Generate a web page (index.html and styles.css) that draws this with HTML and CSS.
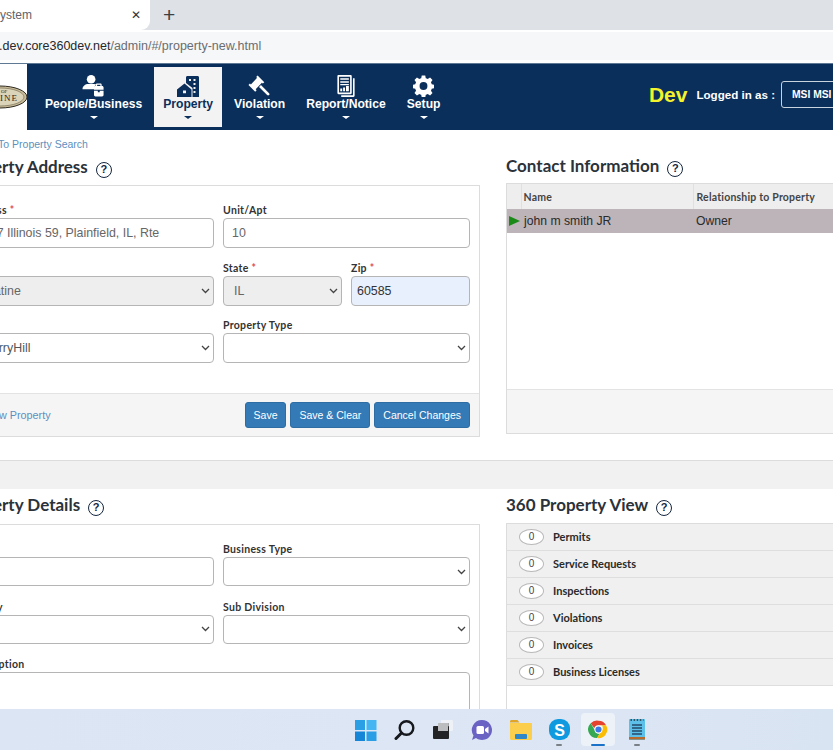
FILE: index.html
```html
<!DOCTYPE html>
<html>
<head>
	<title>Property System</title>
	<link rel="stylesheet" href="styles.css">
</head>
<body>
	<div class="browser-tabs">
		<div class="tab"><span class="tab-title">System</span><span class="tab-close">✕</span></div>
		<span class="tab-new">+</span>
	</div>
	<div class="browser-bar">
		<div class="url"><b>.dev.core360dev.net</b>/admin/#/property-new.html</div>
	</div>

	<header class="topnav">
		<div class="logo">
			<svg width="27" height="30" viewBox="0 0 27 30">
				<ellipse cx="0" cy="15" rx="27" ry="11" fill="#c9bd9b" stroke="#2e2a20" stroke-width="1"/>
				<ellipse cx="0" cy="15" rx="24" ry="9" fill="#dcd4b8" stroke="#6b6248" stroke-width="0.6"/>
				<text x="1" y="11" class="logo-small">OF</text>
				<text x="0" y="19" class="logo-big">INE</text>
			</svg>
		</div>
		<nav class="menu">
			<a class="menu-item">
				<svg width="24" height="23" viewBox="0 0 24 23" fill="#fff">
					<circle cx="9" cy="4.5" r="4.5"/>
					<path d="M0 15c0-3.500 3-5.500 6-5.500h6c1 0 2 .3 2.800.8-1.500.7-2.300 1.800-2.300 3.200-.0.500-.1 1-.5 1.500z"/>
					<path d="M16 11.500v-1.200c0-.7.500-1.300 1.300-1.300h3.400c.8 0 1.300.6 1.300 1.300v1.200h.5c.8 0 1.500.7 1.500 1.500v2.500h-10v-2.500c0-.8.700-1.500 1.500-1.500zm1.300 0h3.400v-1.200h-3.400zM14 16.500h4v1.500h2v-1.500h4v4.500c0 .8-.7 1.500-1.500 1.500h-7c-.8 0-1.500-.7-1.500-1.500z" transform="translate(-2 0)"/>
				</svg>
				<span>People/Business</span><i class="caret"></i>
			</a>
			<a class="menu-item active">
				<svg width="22" height="22" viewBox="0 0 22 22" fill="#0b2f5b">
					<path d="M9 2.500c0-1 .7-1.500 1.500-1.500h10c.8 0 1.500.5 1.500 1.500v19.500h-6.500v-9l-6.500-5zM12 4v2h2v-2zm4.500 0v2h2v-2zm0 4v2h2v-2zm0 4v2h2v-2zm0 4v2h2v-2z" fill-rule="evenodd"/>
					<path d="M0 14.500l7.500-6 7 6v7.500h-14.500zM6 15.500v2.800h3v-2.800z" fill-rule="evenodd"/>
				</svg>
				<span>Property</span><i class="caret"></i>
			</a>
			<a class="menu-item">
				<svg width="23" height="23" viewBox="0 0 23 23" fill="#fff">
					<path d="M0 10.500l1.500-1.500 1 1 6.500-7-1-1 1.500-1.500 7 7-1.500 1.500-1-1-6.500 7 1 1-1.500 1.500z"/>
					<path d="M11 12.500l2-2 8.500 8.500c.6.6.6 1.400 0 2-.6.6-1.400.6-2 0z"/>
				</svg>
				<span>Violation</span><i class="caret"></i>
			</a>
			<a class="menu-item">
				<svg width="18" height="23" viewBox="0 0 18 23" fill="#fff">
					<path d="M1.200 0h12.600c.7 0 1.200.5 1.200 1.200v17.600c0 .7-.5 1.200-1.200 1.200h-12.600c-.7 0-1.200-.5-1.200-1.200v-17.600c0-.7.500-1.200 1.200-1.200zm.5 1.700v16.600h11.600v-16.600z" fill-rule="evenodd"/>
					<path d="M3 3.500h9v1.500h-9zM3 6.500h9v1.500h-9zM3 9.500h9v1.300h-9zM3 14h2v3h-2zM6 13h2v4h-2zM9 11.500h3v5.500h-3z"/>
					<path d="M16.300 3.500h1.700v18.300c0 .7-.5 1.200-1.200 1.200h-12.800v-1.700h12.300z"/>
				</svg>
				<span>Report/Notice</span><i class="caret"></i>
			</a>
			<a class="menu-item">
				<svg width="21" height="23" viewBox="0 0 24 24" fill="#fff">
					<path fill-rule="evenodd" d="M10 0h4l.6 3.200c.8.200 1.500.5 2.200.9l2.700-1.800 2.800 2.800-1.800 2.700c.4.700.7 1.400.9 2.200l3.200.6v4l-3.200.6c-.2.800-.5 1.500-.9 2.200l1.800 2.700-2.800 2.800-2.700-1.800c-.7.400-1.400.7-2.200.9l-.6 3.200h-4l-.6-3.200c-.8-.2-1.500-.5-2.200-.9l-2.700 1.800-2.800-2.800 1.800-2.700c-.4-.7-.7-1.400-.9-2.200l-3.200-.6v-4l3.200-.6c.2-.8.5-1.500.9-2.200l-1.800-2.700 2.800-2.800 2.700 1.800c.7-.4 1.400-.7 2.200-.9zM12 7.500a4.500 4.500 0 1 0 0 9 4.500 4.500 0 0 0 0-9z"/>
				</svg>
				<span>Setup</span><i class="caret"></i>
			</a>
		</nav>
		<div class="account">
			<span class="env">Dev</span>
			<span class="logged">Logged in as :</span>
			<button class="user-btn" type="button">MSI MSI</button>
		</div>
	</header>

	<main class="page">
		<a class="back-link">Back To Property Search</a>

		<div class="columns">
			<section>
				<h2>Property Address <span class="help">?</span></h2>
				<div class="card">
					<div class="card-body">
						<div class="field half">
							<label>Address <em>*</em></label>
							<input type="text" class="muted" value="1627 Illinois 59, Plainfield, IL, Rte">
						</div>
						<div class="field half">
							<label>Unit/Apt</label>
							<input type="text" class="muted" value="10">
						</div>
						<div class="field half">
							<label>City <em>*</em></label>
							<select class="locked" disabled><option>Palatine</option></select>
						</div>
						<div class="field quarter state">
							<label>State <em>*</em></label>
							<select class="locked" disabled><option>IL</option></select>
						</div>
						<div class="field quarter zip">
							<label>Zip <em>*</em></label>
							<input type="text" class="filled" value="60585">
						</div>
						<div class="field half">
							<label>Town</label>
							<select><option>CherryHill</option></select>
						</div>
						<div class="field half">
							<label>Property Type</label>
							<select><option></option></select>
						</div>
					</div>
					<div class="card-footer">
						<a class="new-link">Add New Property</a>
						<button type="button">Save</button>
						<button type="button">Save &amp; Clear</button>
						<button type="button">Cancel Changes</button>
					</div>
				</div>
			</section>

			<section class="side">
				<h2>Contact Information <span class="help">?</span></h2>
				<div class="contacts">
					<table>
						<thead>
							<tr><th class="gutter"></th><th class="name-col">Name</th><th>Relationship to Property</th></tr>
						</thead>
						<tbody>
							<tr><td class="gutter"><i class="arrow"></i></td><td>john m smith JR</td><td>Owner</td></tr>
						</tbody>
					</table>
					<div class="contacts-footer"></div>
				</div>
			</section>
		</div>

		<div class="band"></div>

		<div class="columns">
			<section>
				<h2 class="second">Property Details <span class="help">?</span></h2>
				<div class="card">
					<div class="card-body details">
						<div class="field half">
							<label>Name</label>
							<input type="text">
						</div>
						<div class="field half">
							<label>Business Type</label>
							<select><option></option></select>
						</div>
						<div class="field half">
							<label>County</label>
							<select><option></option></select>
						</div>
						<div class="field half">
							<label>Sub Division</label>
							<select><option></option></select>
						</div>
						<div class="field full">
							<label>Description</label>
							<textarea></textarea>
						</div>
					</div>
				</div>
			</section>

			<section class="side">
				<h2 class="second">360 Property View <span class="help">?</span></h2>
				<ul class="counts">
					<li><span class="pill">0</span>Permits</li>
					<li><span class="pill">0</span>Service Requests</li>
					<li><span class="pill">0</span>Inspections</li>
					<li><span class="pill">0</span>Violations</li>
					<li><span class="pill">0</span>Invoices</li>
					<li><span class="pill">0</span>Business Licenses</li>
				</ul>
			</section>
		</div>
	</main>

	<footer class="taskbar">
		<span class="task-icon">
			<svg width="22" height="22" viewBox="0 0 22 22">
				<path fill="#2b9fe6" d="M0 1h10v10h-10z"/><path fill="#45b6f2" d="M11.500 1h10v10h-10z"/>
				<path fill="#1585d8" d="M0 12.500h10v9.500h-10z"/><path fill="#2b9fe6" d="M11.500 12.500h10v9.500h-10z"/>
			</svg>
		</span>
		<span class="task-icon">
			<svg width="22" height="22" viewBox="0 0 22 22" fill="none" stroke="#16191d" stroke-width="2.400">
				<circle cx="12.500" cy="9" r="6.800"/><path d="M7.500 14l-5.500 5.500" stroke-linecap="round" stroke-width="3"/>
			</svg>
		</span>
		<span class="task-icon">
			<svg width="20" height="20" viewBox="0 0 20 20">
				<rect x="8" y="0" width="12" height="11" rx="1" fill="#eef1f6"/>
				<rect x="5" y="3" width="11" height="10" fill="#a8a9ab"/>
				<rect x="0" y="6" width="16" height="13" rx="1" fill="#232426"/>
				<rect x="5" y="3" width="10" height="8" fill="#bcbdbf"/>
			</svg>
		</span>
		<span class="task-icon">
			<svg width="22" height="22" viewBox="0 0 22 22">
				<path fill="#6a63c4" d="M11 1a10 10 0 1 1-6 18l-4 2 1.500-4.500a10 10 0 0 1 8.500-15.500z"/>
				<rect x="5.500" y="7" width="7.500" height="8" rx="1.500" fill="#fff"/><path fill="#fff" d="M14 10l3.500-2.500v7l-3.500-2.500z"/>
			</svg>
		</span>
		<span class="task-icon">
			<svg width="22" height="20" viewBox="0 0 22 20">
				<path fill="#e0a526" d="M0 1.500c0-.8.500-1.500 1.500-1.500h6l2 2.500h-9.500z"/>
				<path fill="#fbcf4d" d="M0 3h21c.6 0 1 .4 1 1v14.500c0 .8-.6 1.500-1.500 1.500h-19c-.9 0-1.500-.7-1.500-1.500z"/>
				<rect x="5" y="14" width="12" height="5" rx="1" fill="#2f86c9"/>
			</svg>
		</span>
		<span class="task-icon with-dot">
			<svg width="21" height="21" viewBox="0 0 21 21">
				<rect width="21" height="21" rx="9" fill="#0f9ae0"/>
				<text x="10.500" y="16.500" class="skype-s">S</text>
			</svg>
		</span>
		<span class="task-icon current">
			<svg width="21" height="21" viewBox="0 0 48 48">
				<path fill="#e5432f" d="M24 4a20 20 0 0 1 17.300 10h-17.300a10 10 0 0 0-9.600 7.300l-8.200-11.800a20 20 0 0 1 17.800-5.500z"/>
				<path fill="#34a853" d="M6.200 9.500l8.700 15a10 10 0 0 0 12 8.800l-6.200 10.400a20 20 0 0 1-14.500-34.200z"/>
				<path fill="#fbbc05" d="M41.300 14a20 20 0 0 1-20.600 29.700l8.700-15a10 10 0 0 0 2.300-14.700z"/>
				<circle cx="24" cy="24" r="9" fill="#fff"/><circle cx="24" cy="24" r="7" fill="#3b78e7"/>
			</svg>
		</span>
		<span class="task-icon with-dot">
			<svg width="18" height="24" viewBox="0 0 18 24">
				<rect x="1" y="1" width="16" height="21" rx="1" fill="#5cc0e8"/>
				<path fill="#b66a2c" d="M1 19h16v2.500h-16z"/>
				<path stroke="#234a68" stroke-width="1.300" d="M4 7h10M4 10h10M4 13h10M4 16h10"/>
				<path stroke="#24303a" stroke-width="1.600" stroke-dasharray="1.500 1.600" d="M2.500 2h13"/>
			</svg>
		</span>
	</footer>
</body>
</html>
```

FILE: styles.css
```css
* {
	box-sizing: border-box;
}
html, body {
	margin: 0;
	height: 750px;
	overflow: hidden;
}
body {
	display: flex;
	flex-direction: column;
	font-family: "Liberation Sans", Arial, sans-serif;
	background-color: #fff;
	color: #333;
}

/* browser chrome */
.browser-tabs {
	display: flex;
	align-items: center;
	flex: 0 0 30px;
	background-color: #dee1e6;
}
.tab {
	display: flex;
	align-items: center;
	justify-content: space-between;
	width: 150px;
	height: 30px;
	padding-right: 9px;
	background-color: #fff;
	border-bottom-right-radius: 9px;
	font-size: 12px;
	color: #5f6368;
}
.tab-title {
	margin-left: -8px;
}
.tab-close {
	font-size: 12px;
	color: #333;
}
.tab-new {
	margin-left: 13px;
	font-size: 21px;
	line-height: 28px;
	color: #3c4043;
}
.browser-bar {
	flex: 0 0 33px;
	padding: 2px 0;
	background-color: #fff;
}
.url {
	height: 28px;
	margin-left: -1px;
	background-color: #f6f7f8;
	font-size: 12.5px;
	line-height: 28px;
	color: #6a6d71;
	white-space: nowrap;
}
.url b {
	font-weight: normal;
	color: #25282c;
}

/* app header */
.topnav {
	display: flex;
	align-items: center;
	flex: 0 0 67px;
	background-color: #0b2f5b;
	border-top: 1px solid #5f7894;
	overflow: hidden;
}
.logo {
	display: flex;
	align-items: center;
	width: 27px;
	height: 66px;
	background-color: #fff;
}
.logo-small {
	font-family: "Liberation Serif", serif;
	font-size: 5px;
	fill: #2e2a20;
}
.logo-big {
	font-family: "Liberation Serif", serif;
	font-size: 9px;
	letter-spacing: 1px;
	fill: #2e2a20;
}
.menu {
	display: flex;
	gap: 1px;
	margin-left: 8px;
}
.menu-item {
	display: flex;
	flex-direction: column;
	align-items: center;
	height: 60px;
	padding: 8px 10px 0;
	font-size: 12.15px;
	font-weight: bold;
	color: #fff;
}
.menu-item svg {
	flex: 0 0 22px;
}
.menu-item span {
	line-height: 14px;
}
.menu-item.active {
	padding-left: 9px;
	padding-right: 9px;
	margin: 0 1px;
	background-color: #f3f3f3;
	color: #0b2f5b;
}
.caret {
	margin-top: 5px;
	border-top: 3px solid #fff;
	border-left: 4px solid transparent;
	border-right: 4px solid transparent;
}
.active .caret {
	border-top-color: #0b2f5b;
}
.account {
	display: flex;
	align-items: center;
	margin-left: auto;
	margin-right: -30px;
	padding-bottom: 5px;
}
.env {
	margin-right: 9px;
	font-size: 21px;
	font-weight: bold;
	color: #f4f32c;
}
.logged {
	margin-right: 6px;
	font-size: 11.6px;
	font-weight: bold;
	color: #fff;
}
.user-btn {
	width: 82px;
	height: 27px;
	padding: 0 0 0 10px;
	text-align: left;
	background-color: #0b2f5b;
	border: 1px solid #c9d3de;
	border-radius: 3px;
	font-family: "Liberation Sans", Arial, sans-serif;
	font-size: 10.3px;
	font-weight: bold;
	color: #fff;
}

/* page */
.page {
	flex: 1;
	min-height: 0;
	overflow: hidden;
	padding-top: 7px;
}
.back-link {
	display: block;
	margin-left: -28px;
	font-size: 10.5px;
	line-height: 14px;
	color: #5d8fbe;
}
.columns {
	display: grid;
	grid-template-columns: 523px 420px;
	column-gap: 26px;
	margin-left: -43px;
}
h2 {
	display: flex;
	align-items: center;
	gap: 8px;
	height: 24px;
	margin: 3px 0 7px 0;
	font-family: Lato, sans-serif;
	font-size: 17px;
	font-weight: bold;
	color: #2b323a;
	white-space: nowrap;
}
h2.second {
	margin-top: 3px;
	margin-bottom: 8px;
}
.side h2 {
	margin: 2px 0 6px;
}
.side h2.second {
	margin: 3px 0 7px;
}
.help {
	width: 16px;
	height: 16px;
	margin-top: 7px;
	border: 1.5px solid #14263f;
	border-radius: 50%;
	font-family: "Liberation Sans", Arial, sans-serif;
	font-size: 11px;
	font-weight: bold;
	line-height: 13px;
	text-align: center;
	color: #14263f;
}
.card {
	background-color: #fff;
	border: 1px solid #dcdcdc;
}
.card-body {
	display: grid;
	grid-template-columns: repeat(4, 1fr);
	column-gap: 9px;
	row-gap: 13.5px;
	padding: 18px 9px 30px 9px;
}
.card-body.details {
	row-gap: 14.5px;
}
.field.half {
	grid-column: span 2;
}
.field.full {
	grid-column: span 4;
}
.field.state {
	width: 119px;
}
.field.zip {
	width: 119px;
	justify-self: end;
}
label {
	display: block;
	height: 14px;
	font-family: Lato, sans-serif;
	font-size: 10.5px;
	font-weight: bold;
	line-height: 13px;
	letter-spacing: 0.3px;
	color: #333;
}
label em {
	font-style: normal;
	color: #e04a4a;
}
input[type="text"], select, textarea {
	display: block;
	width: 100%;
	height: 30px;
	padding: 0 8px;
	background-color: #fff;
	border: 1px solid #b5b5b5;
	border-radius: 4px;
	font-family: "Liberation Sans", Arial, sans-serif;
	font-size: 12.4px;
	color: #555;
}
select {
	appearance: none;
	background-image: url("data:image/svg+xml,%3Csvg xmlns='http://www.w3.org/2000/svg' width='9' height='6'%3E%3Cpath d='M1 1l3.500 3.500L8 1' fill='none' stroke='%23444' stroke-width='1.300'/%3E%3C/svg%3E");
	background-repeat: no-repeat;
	background-position: right 3px center;
}
.state select {
	padding-left: 10px;
}
.zip input[type="text"] {
	padding-left: 5px;
}
.details input[type="text"], .details select {
	height: 29px;
}
textarea {
	height: 60px;
}
select.locked {
	background-color: #eee;
	opacity: 1;
	color: #666;
}
input.muted {
	color: #666;
}
input.filled {
	background-color: #e8f0fe;
	color: #333;
}
.card-footer {
	display: flex;
	align-items: center;
	gap: 4px;
	height: 43px;
	padding: 0 9px 0 5px;
	background-color: #f5f5f5;
	border-top: 1px solid #e3e3e3;
}
.new-link {
	margin-right: auto;
	font-size: 10.8px;
	color: #5d8fbe;
}
.card-footer button {
	height: 26px;
	padding: 0 8px;
	background-color: #337ab7;
	border: 1px solid #2e6da4;
	border-radius: 3px;
	font-family: "Liberation Sans", Arial, sans-serif;
	font-size: 10.5px;
	color: #fff;
}

/* contact grid */
.contacts {
	display: flex;
	flex-direction: column;
	height: 251px;
	border: 1px solid #dcdcdc;
}
.contacts table {
	flex: 0 0 auto;
	width: 100%;
	border-collapse: collapse;
	table-layout: fixed;
}
.contacts thead th {
	height: 25px;
	padding: 0 0 0 3px;
	background-color: #eee;
	border-right: 1px solid #e0e0e0;
	font-family: Lato, sans-serif;
	font-size: 10.5px;
	font-weight: bold;
	letter-spacing: 0.2px;
	text-align: left;
	color: #444;
}
.contacts thead .name-col {
	width: 172px;
	padding-left: 2px;
}
.contacts tbody td {
	height: 24px;
	padding: 0 0 0 3px;
	background-color: #bdb4b9;
	font-size: 12.2px;
	color: #2a2a2a;
}
.contacts .gutter {
	width: 14px;
}
.contacts tbody .gutter {
	padding-left: 2px;
}
.arrow {
	display: block;
	width: 0;
	border-left: 11px solid #1a8a17;
	border-top: 5.5px solid transparent;
	border-bottom: 5.5px solid transparent;
}
.contacts-footer {
	flex: 0 0 44px;
	margin-top: auto;
	background-color: #f5f5f5;
	border-top: 1px solid #e3e3e3;
}

.band {
	height: 29px;
	margin-top: 23px;
	background-color: #f1f1f1;
	border-top: 1px solid #dcdcdc;
}

/* counts list */
.counts {
	height: 200px;
	margin: 0;
	padding: 0;
	list-style: none;
	border-left: 1px solid #dcdcdc;
	border-top: 1px solid #dcdcdc;
}
.counts li {
	display: flex;
	align-items: center;
	height: 27px;
	padding-left: 12px;
	padding-bottom: 2px;
	background-color: #f0f0f0;
	border-bottom: 1px solid #dedede;
	font-family: Lato, sans-serif;
	font-size: 11px;
	font-weight: bold;
	color: #2a2a2a;
}
.pill {
	width: 25px;
	height: 16px;
	margin-top: 2px;
	margin-right: 9px;
	background-color: #fff;
	border: 1px solid #b8b8b8;
	border-radius: 50%;
	font-family: "Liberation Sans", Arial, sans-serif;
	font-size: 10px;
	font-weight: normal;
	line-height: 14px;
	text-align: center;
	color: #444;
}

/* windows taskbar */
.taskbar {
	display: flex;
	align-items: center;
	gap: 4.7px;
	flex: 0 0 41px;
	padding-left: 349px;
	background: linear-gradient(90deg, #dbe5f3, #dde6f4 50%, #d9e4f3);
}
.task-icon {
	position: relative;
	display: flex;
	align-items: center;
	justify-content: center;
	width: 34px;
	height: 33px;
	border-radius: 4px;
}
.task-icon.current {
	background-color: #edf2f9;
}
.task-icon.current::after, .task-icon.with-dot::after {
	content: "";
	position: absolute;
	bottom: 0;
	left: 50%;
	width: 6px;
	height: 2px;
	margin-left: -3px;
	border-radius: 1px;
	background-color: #7b8087;
}
.task-icon.current::after {
	width: 14px;
	margin-left: -7px;
	background-color: #1a73c8;
}
.skype-s {
	font-family: "Liberation Sans", Arial, sans-serif;
	font-size: 16px;
	font-weight: bold;
	fill: #fff;
	text-anchor: middle;
}
```
